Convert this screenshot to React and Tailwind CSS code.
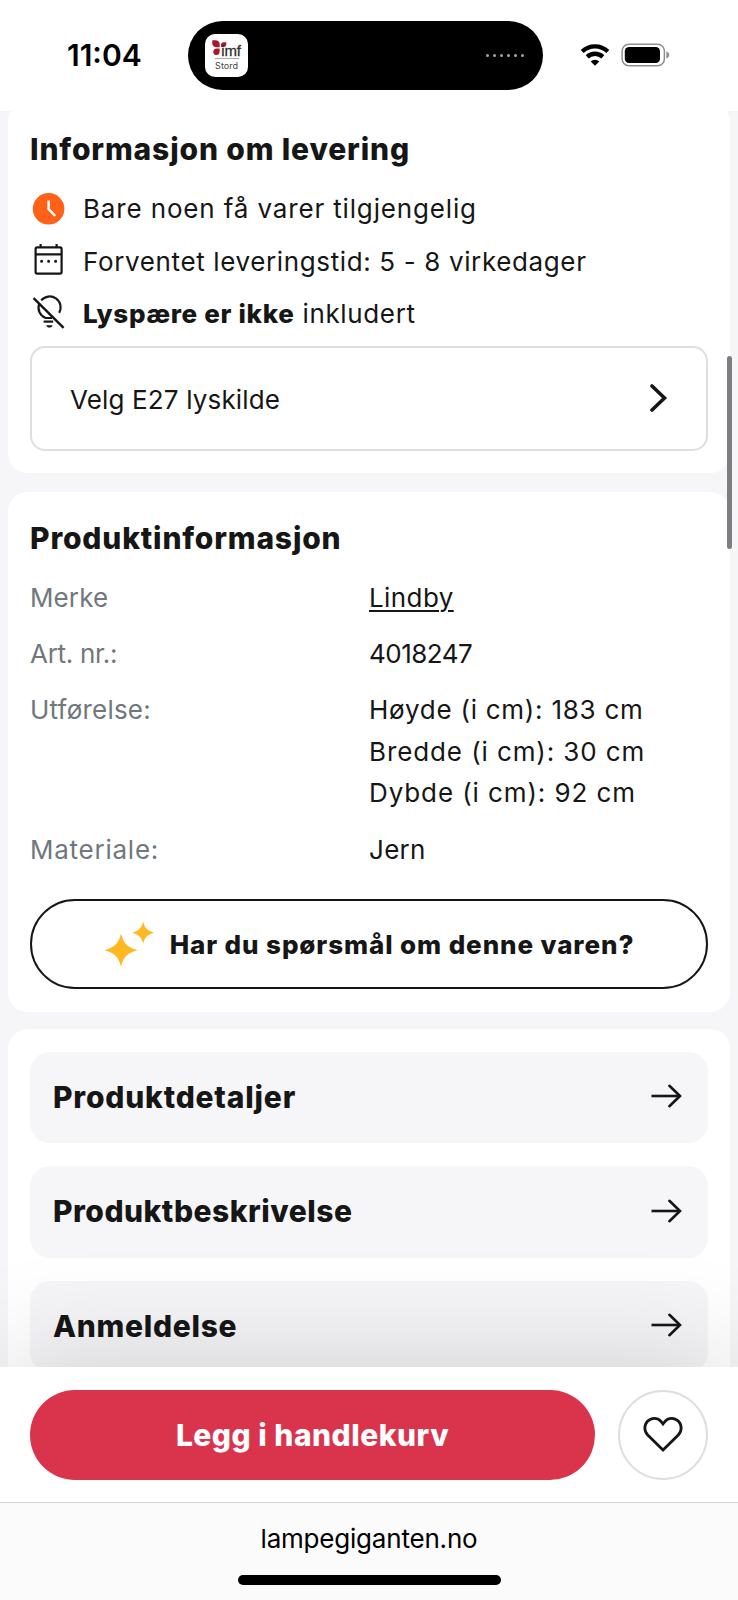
import React from 'react';

const details = [
    { label: 'Merke', labelClass: 'tracking-[0.1px]', values: [{ text: 'Lindby', className: 'tracking-[0.4px] underline decoration-[1.5px] underline-offset-[3px]' }] },
    { label: 'Art. nr.:', labelClass: 'tracking-[-0.3px]', values: [{ text: '4018247', className: 'tracking-[-0.5px]' }] },
    {
        label: 'Utførelse:',
        labelClass: 'tracking-[0.2px]',
        values: [
            { text: 'Høyde (i cm): 183 cm', className: 'tracking-[0.75px]' },
            { text: 'Bredde (i cm): 30 cm', className: 'tracking-[0.9px]' },
            { text: 'Dybde (i cm): 92 cm', className: 'tracking-[0.9px]' },
        ],
    },
    { label: 'Materiale:', labelClass: 'tracking-[0.75px]', values: [{ text: 'Jern', className: 'tracking-[0.3px]' }] },
];

const sections = [
    { title: 'Produktdetaljer', className: 'tracking-[0.8px]' },
    { title: 'Produktbeskrivelse', className: 'tracking-[0.5px]' },
    { title: 'Anmeldelse', className: 'tracking-[0.7px]' },
];

const ClockIcon = () => (
    <svg viewBox="0 0 36 36" className="size-9" fill="none">
        <circle cx="18.6" cy="17.8" r="15.8" fill="#ff6118" />
        <path d="M18.6 9.5V18l6.6 6.8" stroke="white" strokeWidth="2.5" />
    </svg>
);

const CalendarIcon = () => (
    <svg viewBox="0 0 36 36" className="size-9" fill="none" stroke="#161616" strokeWidth="2.2">
        <rect x="5.6" y="3.4" width="26" height="26.2" rx="1.6" />
        <path d="M5.4 10.4h26.4M10.6 0v4M26.6 0v4" />
        <path d="M11.6 17.2h.01M18.6 17.2h.01M25.6 17.2h.01" strokeWidth="3" strokeLinecap="round" />
    </svg>
);

const NoBulbIcon = () => (
    <svg viewBox="0 0 36 36" className="size-9 overflow-visible" fill="none" stroke="#161616" strokeWidth="2.2">
        <path d="M3.6 2.2 33.6 31.8" strokeWidth="2.4" />
        <path d="M11.2 4.4a11 11 0 0 1 18 12.5" />
        <path d="M9.1 8.1A11 11 0 0 0 15.7 22H22" />
        <path d="M13.6 25.6h9.6" />
        <path d="M16.2 29.2h6.4c-.5 1.6-1.6 2.4-3.2 2.4s-2.7-.8-3.2-2.4Z" fill="#161616" stroke="none" />
    </svg>
);

const ArrowIcon = () => (
    <svg viewBox="0 0 32 24" className="h-6 w-8" fill="none" stroke="#161616" strokeWidth="2.6">
        <path d="M.5 12h28.6" />
        <path d="M18.4 1.8 29 12 18.4 22.2" strokeLinecap="round" />
    </svg>
);

function StatusBar() {
    return (
        <div className="flex h-[111px] shrink-0 items-start bg-white text-black">
            <div className="w-[188px] pt-[33px] pl-[67px] text-[30px] leading-[44px] font-semibold">11:04</div>
            <div className="mt-[21px] flex h-[69px] w-[355px] items-center justify-between rounded-full bg-black pr-[19px] pl-[17px]">
                <div className="flex size-[43px] flex-col items-center rounded-[10px] bg-white pt-1.5">
                    <div className="flex h-[18px] items-start">
                        <svg viewBox="0 0 15 16" className="h-4 w-[15px]" fill="#a8182c">
                            <path d="M.3.3h3.4c2.4 0 4 1.7 4 4v3h-3C2.2 7.3.3 5.8.3 3.6Z" />
                            <path d="M9 7V5c0-1.7 1.2-2.7 2.7-2.7h2.6v1.9C14.3 6 13.2 7 11.6 7Z" />
                            <path d="M7.6 8.6v2.8c0 2.2-1.2 3.6-3.3 3.6-1.9 0-3-1.3-3-3.1 0-2 1.3-3.3 3.4-3.3Z" />
                        </svg>
                        <span className="-ml-[6px] pt-[3px] font-['Liberation_Sans'] text-[15px] leading-[15px] tracking-[-0.2px] text-[#2e2e30] [-webkit-text-stroke:0.3px_#2e2e30]">imf</span>
                    </div>
                    <div className="h-px w-6 bg-[#b9a5a5]" />
                    <span className="text-[9px] leading-[13px] text-[#444]">Stord</span>
                </div>
                <div className="flex gap-1">
                    {[0, 1, 2, 3, 4, 5].map((dot) => (
                        <span key={dot} className="size-[3px] rounded-full bg-[#a5a5a5]" />
                    ))}
                </div>
            </div>
            <svg viewBox="0 0 30 24" className="mt-[43px] ml-[37px] h-6 w-[30px]" fill="none" stroke="black" strokeWidth="4.3">
                <path d="M2.2 8.5a18.3 18.3 0 0 1 25.6 0" />
                <path d="M7.2 13.9a11.2 11.2 0 0 1 15.6 0" />
                <path d="m15 22.8-4.3-4.3a6.2 6.2 0 0 1 8.6 0Z" fill="black" stroke="none" />
            </svg>
            <svg viewBox="0 0 50 24" className="mt-[43px] ml-[11px] h-6 w-[50px]">
                <rect x="1.1" y="1.2" width="42.3" height="21.6" rx="6.8" fill="none" stroke="#8e8e8e" strokeWidth="1.5" />
                <rect x="3.8" y="4" width="35.2" height="16" rx="4.3" fill="black" />
                <path d="M45.4 8.5c1.7.6 2.8 1.9 2.8 3.5s-1.1 2.9-2.8 3.5Z" fill="#8e8e8e" />
            </svg>
        </div>
    );
}

function DeliveryCard() {
    return (
        <div className="-mt-[9px] h-[371px] rounded-[20px] bg-white px-[22px] pt-[27px]">
            <h2 className="text-[30px] leading-[40px] font-extrabold tracking-[0.85px]">Informasjon om levering</h2>
            <div className="mt-[14px]">
                <div className="flex h-[52.4px] items-center gap-[17px]">
                    <ClockIcon />
                    <span className="tracking-[0.85px]">Bare noen få varer tilgjengelig</span>
                </div>
                <div className="flex h-[52.4px] items-center gap-[17px]">
                    <CalendarIcon />
                    <span className="tracking-[0.63px]">Forventet leveringstid: 5 - 8 virkedager</span>
                </div>
                <div className="flex h-[52.4px] items-center gap-[17px]">
                    <NoBulbIcon />
                    <span className="tracking-[0.65px]">
                        <b className="font-extrabold tracking-[0.68px]">Lyspære er ikke</b> inkludert
                    </span>
                </div>
            </div>
            <button className="mt-1.5 flex h-[105px] w-full items-center justify-between rounded-[15px] border-2 border-[#dedede] px-[38px]">
                <span className="pt-[2px] tracking-[0.15px]">Velg E27 lyskilde</span>
                <svg viewBox="0 0 18 30" className="-mt-px h-[30px] w-[18px]" fill="none" stroke="#161616" strokeWidth="3.6" strokeLinecap="round">
                    <path d="M2 3 14.5 15 2 27" />
                </svg>
            </button>
        </div>
    );
}

function ProductInfoCard() {
    return (
        <div className="mt-[19px] h-[520px] rounded-[20px] bg-white px-[22px] pt-[26px]">
            <h2 className="text-[30px] leading-[40px] font-extrabold tracking-[0.82px]">Produktinformasjon</h2>
            <div className="mt-[19px] flex flex-col gap-[14.7px] leading-[41.5px]">
                {details.map((row) => (
                    <div key={row.label} className="grid grid-cols-2">
                        <span className={`text-[#70777e] ${row.labelClass}`}>{row.label}</span>
                        <div className="flex flex-col items-start">
                            {row.values.map((v) => (
                                <span key={v.text} className={v.className}>{v.text}</span>
                            ))}
                        </div>
                    </div>
                ))}
            </div>
            <button className="mt-[29px] flex h-[90px] w-full items-center justify-center gap-4 rounded-full border-2 border-[#161616]">
                <svg viewBox="0 0 50 46" className="h-[46px] w-[50px]" fill="#ffb81f">
                    <path d="M17 12.4c2.3 9.3 5.5 13.5 16.5 16.8-11 3-14.2 7.3-16.5 16.5C14.7 36.5 11.5 32.2.5 29.2 11.5 25.9 14.7 21.7 17 12.4Z" />
                    <path d="M39.2.5c1.5 6.2 3.6 9 11 11.2-7.4 2.2-9.5 5-11 11-1.5-6-3.6-8.8-11-11 7.4-2.2 9.5-5 11-11.2Z" />
                </svg>
                <span className="pt-px font-extrabold tracking-[0.9px]">Har du spørsmål om denne varen?</span>
            </button>
        </div>
    );
}

function SectionsCard() {
    return (
        <div className="mt-[17px] flex flex-col gap-[23.2px] rounded-t-[20px] bg-white px-[22px] pt-[23px] pb-6">
            {sections.map((s) => (
                <button key={s.title} className="flex h-[91.3px] w-full shrink-0 items-center justify-between rounded-[20px] bg-[#f6f6f9] pr-[25px] pl-[23px]">
                    <span className={`-mt-[2px] text-[30px] leading-[40px] font-extrabold ${s.className}`}>{s.title}</span>
                    <span className="-mt-[3px]"><ArrowIcon /></span>
                </button>
            ))}
        </div>
    );
}

export default function App() {
    return (
        <div className="relative flex h-[1600px] w-[738px] flex-col overflow-hidden bg-white font-['Inter',sans-serif] text-[26px] leading-[40px] text-[#161616]">
            <StatusBar />

            <div className="h-[1256px] shrink-0 overflow-hidden bg-[#f6f6f9] px-2">
                <DeliveryCard />
                <ProductInfoCard />
                <SectionsCard />
            </div>

            {/* sticky cart bar */}
            <div className="relative flex h-[135px] shrink-0 items-center gap-[23px] bg-white px-[30px] shadow-[0_0_120px_rgba(0,0,0,0.17)]">
                <button className="h-[90px] flex-1 rounded-full bg-[#da344d] text-[30px] font-extrabold tracking-[0.5px] text-white">Legg i handlekurv</button>
                <button className="flex size-[90px] items-center justify-center rounded-full border-2 border-[#dedede] pb-[2px]">
                    <svg viewBox="0 0 40 36" className="h-9 w-10 overflow-visible" fill="none" stroke="#161616" strokeWidth="2.8">
                        <path d="M20 34 4.7 19C1 15.3.9 9.2 4.5 5.300 8.200 1.400 14.200 1.300 17.800 5.200L20 8 22.200 5.200c3.600-3.900 9.600-3.800 13.300.1 3.600 3.900 3.500 10-.2 13.700Z" />
                    </svg>
                </button>
            </div>

            <div className="relative flex flex-1 flex-col items-center border-t border-[#d3d3d6] bg-[#fbfbfc] pt-[15px] text-black">
                <span className="pt-px tracking-[-0.2px]">lampegiganten.no</span>
                <div className="mt-[15.5px] h-[10px] w-[263px] rounded-full bg-black" />
            </div>

            {/* scroll thumb */}
            <div className="absolute top-[356px] right-[6px] h-[193px] w-[5px] rounded-full bg-[#7e7e80]" />
        </div>
    );
}
